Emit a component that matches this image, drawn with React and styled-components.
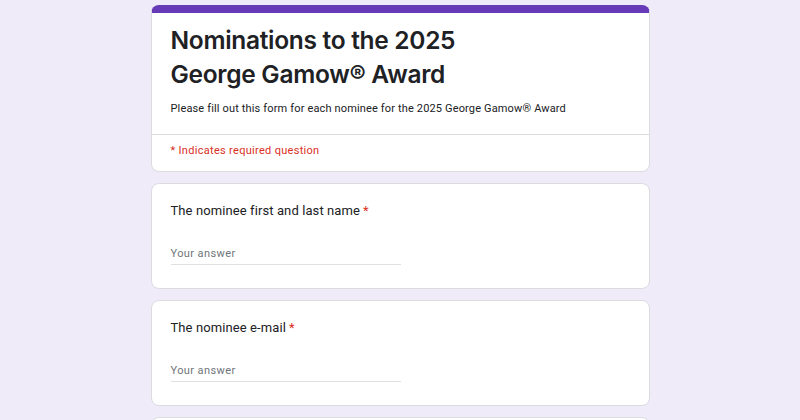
import React from 'react';
import styled, { createGlobalStyle } from 'styled-components';

const GlobalStyle = createGlobalStyle`
  html, body {
    margin: 0;
    padding: 0;
    background: #f0ebf8;
    font-family: Roboto, "Liberation Sans", sans-serif;
  }
`;

const Page = styled.div`
  display: flex;
  flex-direction: column;
  align-items: center;
  gap: 11px;
  padding-top: 5px;
  height: 420px;
  overflow: hidden;
`;

const Card = styled.div`
  width: 499px;
  box-sizing: border-box;
  background: #fff;
  border-radius: 8px;
  border: 1px solid #dadce0;
  overflow: hidden;
  flex-shrink: 0;
  border-top: ${({ accent }) => (accent ? '8px solid #673ab7' : '1px solid #dadce0')};
`;

const Header = styled.div`
  padding: 10px 19px 17px;
`;

const Title = styled.h1`
  margin: 0;
  font-family: Inter, "Liberation Sans", sans-serif;
  font-weight: 600;
  font-size: 24.5px;
  line-height: 34px;
  letter-spacing: -0.3px;
  color: #202124;
`;

const Description = styled.p`
  margin: 10px 0 0;
  font-size: 11px;
  line-height: 16px;
  letter-spacing: 0.15px;
  color: #202124;
`;

const Divider = styled.div`
  height: 1px;
  background: #dadce0;
`;

const Required = styled.div`
  padding: 8px 19px 12px;
  font-size: 11px;
  line-height: 16px;
  letter-spacing: 0.3px;
  color: #d93025;
`;

const Question = styled.div`
  padding: 17px 19px 24px;
  height: 104px;
  box-sizing: border-box;
`;

const Label = styled.div`
  font-size: 13px;
  line-height: 20px;
  letter-spacing: 0.1px;
  color: #202124;

  span {
    color: #d93025;
    margin-left: 3px;
  }
`;

const Answer = styled.div`
  margin-top: 25px;
  width: 230px;
  border-bottom: 1px solid #e0e0e0;
  padding-bottom: 2px;
  font-size: 11px;
  line-height: 16px;
  letter-spacing: 0.4px;
  color: #70757a;
`;

const questions = ['The nominee first and last name', 'The nominee e-mail'];

export default function App() {
  return (
    <>
      <GlobalStyle />
      <Page>
        <Card accent>
          <Header>
            <Title>
              Nominations to the 2025
              <br />
              George Gamow® Award
            </Title>
            <Description>
              Please fill out this form for each nominee for the 2025 George Gamow® Award
            </Description>
          </Header>
          <Divider />
          <Required>* Indicates required question</Required>
        </Card>
        {questions.map((q) => (
          <Card key={q}>
            <Question>
              <Label>
                {q}
                <span>*</span>
              </Label>
              <Answer>Your answer</Answer>
            </Question>
          </Card>
        ))}
        <Card>
          <Question />
        </Card>
      </Page>
    </>
  );
}
